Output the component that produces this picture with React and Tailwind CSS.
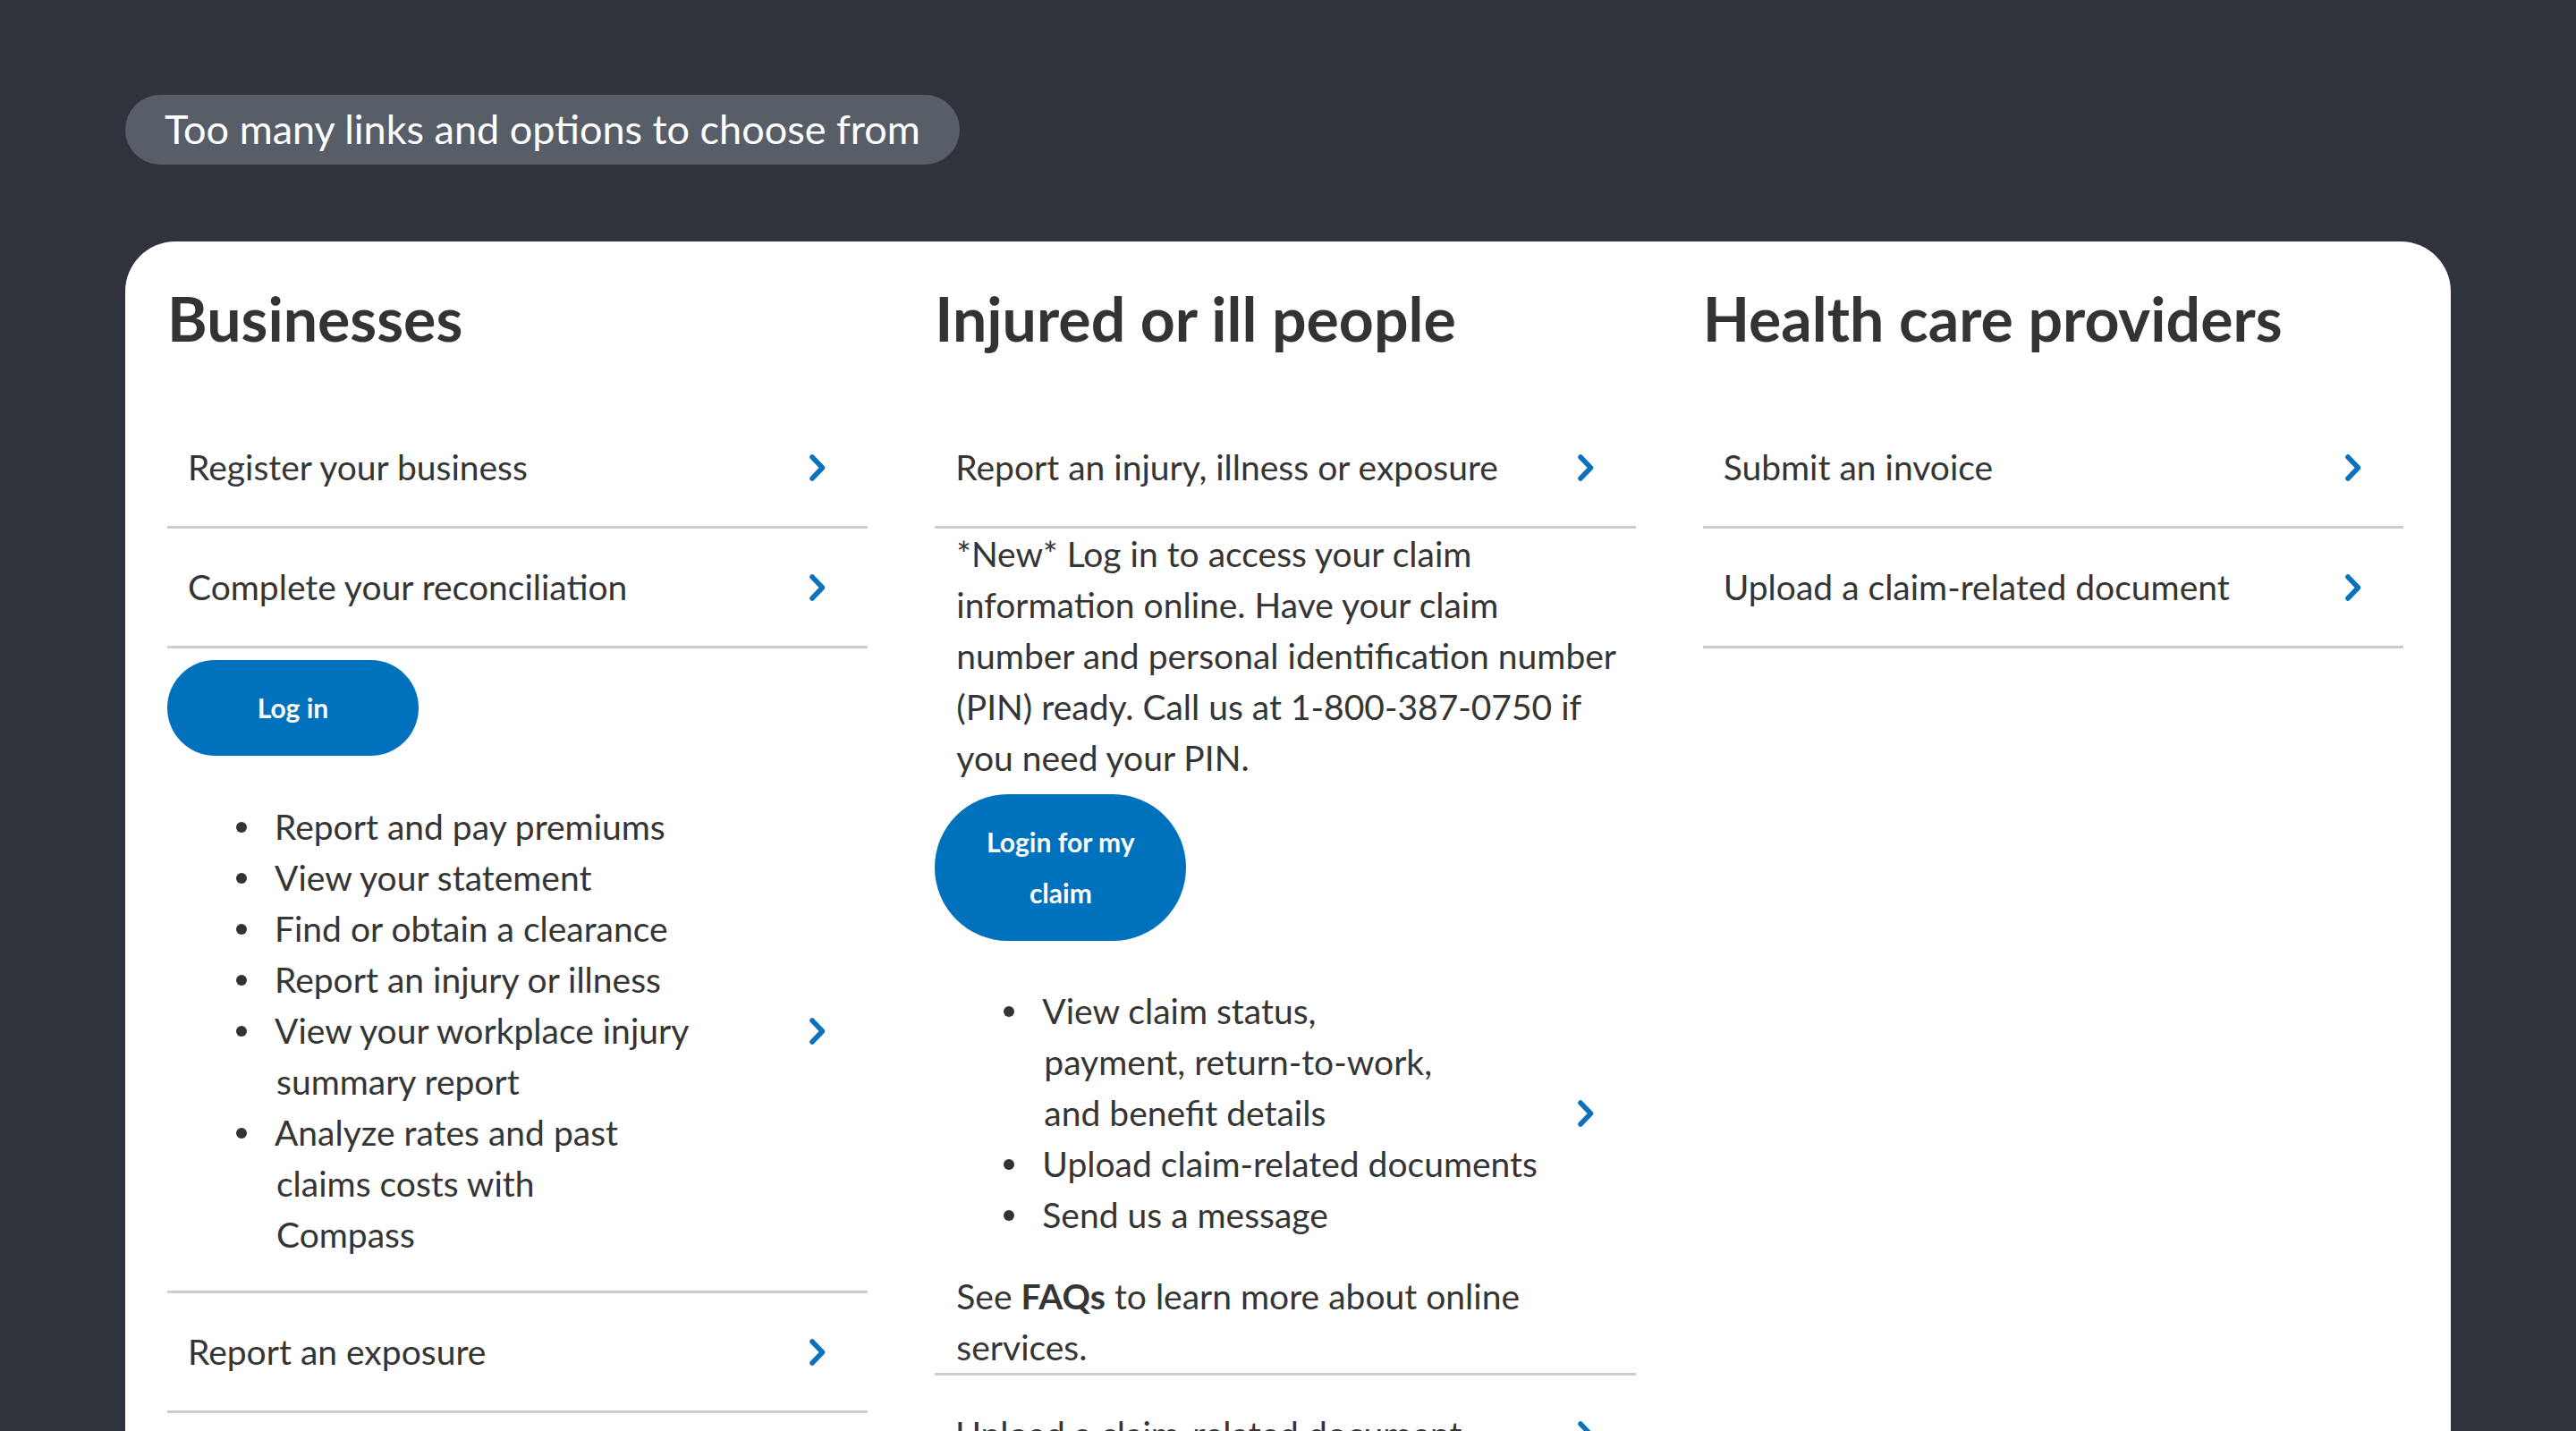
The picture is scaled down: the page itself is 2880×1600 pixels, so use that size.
import React from 'react';

const font = { fontFamily: 'Lato, "Noto Sans", sans-serif' };

function Chevron() {
  return (
    <svg width="20" height="32" viewBox="0 0 20 32" className="shrink-0" fill="none">
      <path d="M4 4 L15.5 16 L4 28" stroke="#0a71bd" strokeWidth="5.5" strokeLinecap="round" strokeLinejoin="round" />
    </svg>
  );
}

function LinkRow({ label }) {
  return (
    <div className="flex h-[134px] items-center justify-between border-b-[3px] border-[#cdcdcd] pl-[23px] pr-[46px]">
      <span>{label}</span>
      <Chevron />
    </div>
  );
}

function Bullets({ items }) {
  return (
    <ul className="flex-1">
      {items.map((lines, i) => (
        <li className="flex" key={i}>
          <span className="flex h-[57px] w-[120px] shrink-0 items-center pl-[77px]">
            <span className="h-[12px] w-[12px] rounded-full bg-[#333]" />
          </span>
          <span>
            {lines.map((line, j) => (
              <span className={j > 0 ? 'block pl-[2px]' : 'block'} key={j}>
                {line}
              </span>
            ))}
          </span>
        </li>
      ))}
    </ul>
  );
}

function PillButton({ lines }) {
  return (
    <div className="inline-flex w-[281px] flex-col items-center justify-center rounded-full bg-[#0071bc] py-[25px] text-[30px] font-bold leading-[57px] text-white">
      {lines.map((l) => (
        <span key={l}>{l}</span>
      ))}
    </div>
  );
}

function Heading({ children }) {
  return <h2 className="text-[68px] font-bold leading-[80px] text-[#333]">{children}</h2>;
}

export default function App() {
  return (
    <div className="h-[1600px] overflow-hidden bg-[#30333b] px-[140px] pt-[106px]" style={font}>
      <div className="inline-flex h-[78px] items-center rounded-full bg-[#575e68] px-[44px] text-[45px] text-white">
        Too many links and options to choose from
      </div>

      <div className="mt-[86px] grid grid-cols-3 gap-x-[75px] rounded-[56px] bg-white pb-20 pl-[47px] pr-[53px] pt-[46px] text-[39px] leading-[57px] text-[#353535]">
        <section>
          <Heading>Businesses</Heading>
          <div className="mt-[61px]">
            <LinkRow label="Register your business" />
            <LinkRow label="Complete your reconciliation" />
            <div className="border-b-[3px] border-[#cdcdcd] pb-[34px] pt-[13px]">
              <PillButton lines={['Log in']} />
              <div className="mt-[51px] flex items-center pr-[46px]">
                <Bullets
                  items={[
                    ['Report and pay premiums'],
                    ['View your statement'],
                    ['Find or obtain a clearance'],
                    ['Report an injury or illness'],
                    ['View your workplace injury', 'summary report'],
                    ['Analyze rates and past', 'claims costs with', 'Compass'],
                  ]}
                />
                <Chevron />
              </div>
            </div>
            <LinkRow label="Report an exposure" />
          </div>
        </section>

        <section>
          <Heading>Injured or ill people</Heading>
          <div className="mt-[61px]">
            <LinkRow label="Report an injury, illness or exposure" />
            <div className="border-b-[3px] border-[#cdcdcd]">
              <p className="whitespace-nowrap pl-[24px]">
                *New* Log in to access your claim
                <br />
                information online. Have your claim
                <br />
                number and personal identification number
                <br />
                (PIN) ready. Call us at 1-800-387-0750 if
                <br />
                you need your PIN.
              </p>
              <div className="mt-[12px]">
                <PillButton lines={['Login for my', 'claim']} />
              </div>
              <div className="mt-[50px] flex items-center pr-[46px]">
                <Bullets
                  items={[
                    ['View claim status,', 'payment, return-to-work,', 'and benefit details'],
                    ['Upload claim-related documents'],
                    ['Send us a message'],
                  ]}
                />
                <Chevron />
              </div>
              <p className="mt-[34px] pl-[24px]">
                See <strong className="font-bold">FAQs</strong> to learn more about online
                <br />
                services.
              </p>
            </div>
            <LinkRow label="Upload a claim-related document" />
          </div>
        </section>

        <section>
          <Heading>Health care providers</Heading>
          <div className="mt-[61px]">
            <LinkRow label="Submit an invoice" />
            <LinkRow label="Upload a claim-related document" />
          </div>
        </section>
      </div>
    </div>
  );
}
